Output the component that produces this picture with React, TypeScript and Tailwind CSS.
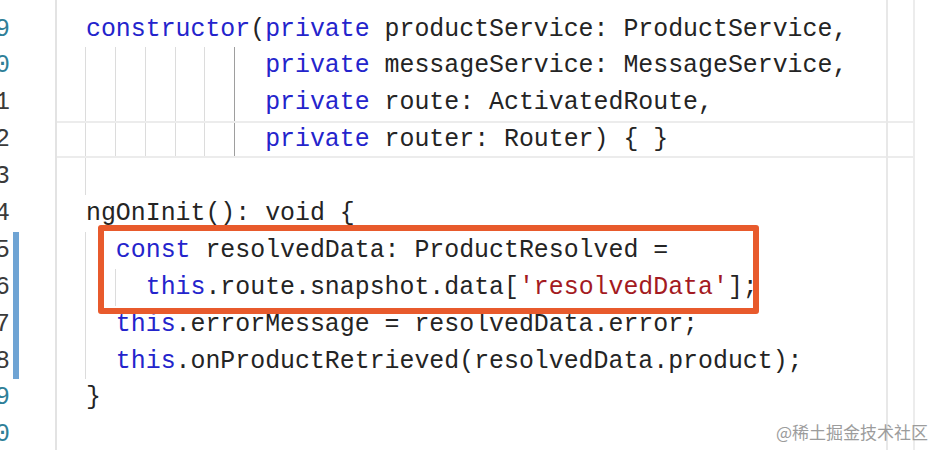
import React from 'react';

type Seg = { t: string; c?: 'kw' | 'str' };
type Line = { num: string; segs: Seg[]; guides: number[]; active?: number; changed?: boolean; current?: boolean };

const CHAR = 14.93;

const lines: Line[] = [
  { num: '19', segs: [{ t: 'constructor', c: 'kw' }, { t: '(' }, { t: 'private', c: 'kw' }, { t: ' productService: ProductService,' }], guides: [] },
  { num: '20', segs: [{ t: '            ' }, { t: 'private', c: 'kw' }, { t: ' messageService: MessageService,' }], guides: [0, 2, 4, 6, 8], active: 10 },
  { num: '21', segs: [{ t: '            ' }, { t: 'private', c: 'kw' }, { t: ' route: ActivatedRoute,' }], guides: [0, 2, 4, 6, 8], active: 10 },
  { num: '22', segs: [{ t: '            ' }, { t: 'private', c: 'kw' }, { t: ' router: Router) { }' }], guides: [0, 2, 4, 6, 8], active: 10, current: true },
  { num: '23', segs: [], guides: [0] },
  { num: '24', segs: [{ t: 'ngOnInit(): void {' }], guides: [] },
  { num: '25', segs: [{ t: '  ' }, { t: 'const', c: 'kw' }, { t: ' resolvedData: ProductResolved =' }], guides: [0], changed: true },
  { num: '26', segs: [{ t: '    ' }, { t: 'this', c: 'kw' }, { t: '.route.snapshot.data[' }, { t: "'resolvedData'", c: 'str' }, { t: '];' }], guides: [0, 2], changed: true },
  { num: '27', segs: [{ t: '  ' }, { t: 'this', c: 'kw' }, { t: '.errorMessage = resolvedData.error;' }], guides: [0], changed: true },
  { num: '28', segs: [{ t: '  ' }, { t: 'this', c: 'kw' }, { t: '.onProductRetrieved(resolvedData.product);' }], guides: [0], changed: true },
  { num: '29', segs: [{ t: '}' }], guides: [] },
  { num: '30', segs: [], guides: [] },
];

const tealNums = ['19', '20', '29', '30'];

export default function App() {
  return (
    <div className="relative w-[935px] h-[450px] overflow-hidden bg-white flex font-['Liberation_Mono',monospace] text-[24.88px] leading-[36.9px] text-[#242424]">
      {/* gutter */}
      <div className="w-[57px] shrink-0 border-r-2 border-[#e3e3e3] pt-[10.5px] flex">
        <div className="w-[40px] -ml-[30px] shrink-0 text-right">
          {lines.map((l) => (
            <div key={l.num} className={`h-[36.9px] ${tealNums.includes(l.num) ? 'text-[#2f7f98]' : 'text-[#3a3a3a]'}`}>
              {l.num}
            </div>
          ))}
        </div>
        <div className="w-[6px] ml-[3px] shrink-0">
          {lines.map((l) => (
            <div key={l.num} className={`h-[36.9px] ${l.changed ? 'bg-[#6fa4d4]' : ''}`} />
          ))}
        </div>
      </div>

      {/* editor */}
      <div className="relative w-[858px] shrink-0 border-r-2 border-[#ececec] pt-[10.5px]">
        {lines.map((l) => (
          <div
            key={l.num}
            className={`relative h-[36.9px] pl-[29px] whitespace-pre ${l.current ? 'border-y-2 border-[#ececec]' : ''}`}
          >
            {l.guides.map((g) => (
              <span
                key={g}
                className="absolute top-0 bottom-0 w-px bg-[#dcdcdc]"
                style={{ left: 29 + g * CHAR - 1 }}
              />
            ))}
            {l.active !== undefined && (
              <span className="absolute top-0 bottom-0 w-px bg-[#9e9e9e]" style={{ left: 29 + l.active * CHAR - 1 }} />
            )}
            <span className={l.current ? 'relative -top-[2px]' : ''}>
              {l.segs.map((s, i) => (
                <span key={i} className={s.c === 'kw' ? 'text-[#2424cc]' : s.c === 'str' ? 'text-[#a31a22]' : ''}>
                  {s.t}
                </span>
              ))}
            </span>
          </div>
        ))}
        {/* ruler */}
        <div className="absolute top-0 bottom-0 left-[829px] w-[2px] bg-[#e8e8e8]" />
      </div>

      {/* highlight box */}
      <div className="absolute left-[98px] top-[225px] w-[661px] h-[89px] border-[6px] border-[#e85a2c] rounded-[3px]" />

      {/* watermark */}
      <div className="absolute right-[7px] bottom-[8px] text-[17px] leading-[20px] text-[#9c9c9c] font-['Noto_Sans_CJK_SC','Noto_Sans',sans-serif]">
        @稀土掘金技术社区
      </div>
    </div>
  );
}
